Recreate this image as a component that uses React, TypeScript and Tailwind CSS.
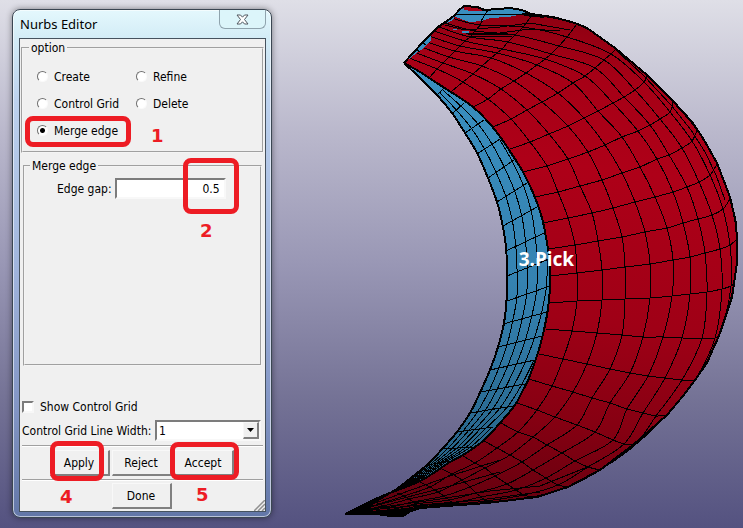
import React from "react";

type Point = [number, number];

/* Smooth curve through every point (Catmull-Rom converted to cubic segments). */
function curve(points: Point[]): string {
  let d = `M${points[0][0]} ${points[0][1]}`;
  for (let i = 0; i < points.length - 1; i++) {
    const p0 = points[Math.max(i - 1, 0)];
    const p1 = points[i];
    const p2 = points[i + 1];
    const p3 = points[Math.min(i + 2, points.length - 1)];
    d += `C${p1[0] + (p2[0] - p0[0]) / 6} ${p1[1] + (p2[1] - p0[1]) / 6} ${p2[0] - (p3[0] - p1[0]) / 6} ${p2[1] - (p3[1] - p1[1]) / 6} ${p2[0]} ${p2[1]}`;
  }
  return d;
}

function line(points: Point[]): string {
  return "M" + points.map((p) => p.join(" ")).join("L");
}

const crown: Point[] = [
  [404, 63], [413, 53], [423, 42], [431, 34], [438, 27], [447, 21], [455, 15], [459, 10], [464, 6],
  [477, 7], [485, 10], [498, 9], [510, 8], [522, 10], [531, 14],
];

const outerEdge: Point[] = [
  [531, 14], [553, 17], [575, 23], [587, 28], [615, 48], [647, 75], [673, 101], [693, 123], [704, 140],
  [717, 163], [730, 197], [736, 223], [737, 240], [737, 263], [732, 297], [720, 333], [707, 363],
  [695, 380], [683, 396], [667, 415], [633, 445], [600, 470], [568, 487], [537, 497], [487, 503],
  [420, 508], [411, 511], [403, 516], [390, 516], [377, 514], [368, 512], [345, 514],
];

const rimEdge: Point[] = [
  [345, 514], [380, 497], [420, 481], [450, 462], [463, 455], [483, 441], [500, 423], [515, 405],
  [523, 390], [529, 378], [540, 346], [547, 315], [550, 287], [550, 263], [547, 243], [542, 218],
  [534, 195], [523, 172], [513, 156], [495, 130], [473, 107], [443, 87], [420, 72], [404, 63],
];

const innerEdge: Point[] = [
  [404, 63], [420, 78], [437, 95], [452, 113], [465, 133], [477, 153], [488, 178], [497, 202],
  [503, 227], [506, 247], [507, 268], [507, 293], [504, 323], [498, 347], [490, 370], [478, 397],
  [470, 413], [457, 432], [443, 448], [428, 464], [407, 481], [390, 493], [345, 514],
];

/* Mesh rows of the red face, each from the rim to the outer silhouette. */
const rows: Point[][] = [
  [[404, 63], [409, 58], [414, 52], [419, 46], [424, 41], [429, 36], [434, 31], [439, 27], [445, 23], [451, 18], [458, 12]],
  [[430, 77], [437, 69], [443, 63], [449, 57], [455, 51], [460, 46], [465, 41], [470, 37], [475, 31], [480, 25], [487, 12]],
  [[452, 91], [463, 82], [473, 74], [482, 66], [491, 58], [497, 53], [502, 49], [508, 42], [515, 35], [523, 27], [532, 15]],
  [[473, 107], [488, 99], [501, 89], [514, 81], [526, 73], [537, 65], [545, 59], [551, 54], [559, 46], [567, 37], [577, 24]],
  [[493, 127], [511, 119], [527, 110], [542, 102], [558, 93], [573, 83], [585, 76], [595, 68], [604, 60], [611, 54], [616, 49]],
  [[510, 149], [530, 142], [549, 134], [568, 126], [584, 118], [598, 111], [613, 103], [624, 97], [635, 90], [644, 82], [647, 76]],
  [[523, 172], [547, 166], [568, 159], [588, 152], [605, 145], [622, 137], [638, 131], [650, 125], [660, 119], [670, 112], [673, 102]],
  [[535, 197], [558, 192], [580, 186], [602, 180], [622, 173], [640, 167], [657, 159], [669, 155], [682, 148], [692, 141], [697, 130]],
  [[543, 223], [568, 218], [592, 213], [613, 208], [635, 202], [655, 197], [673, 192], [687, 187], [699, 182], [710, 175], [717, 164]],
  [[548, 249], [575, 245], [598, 241], [622, 237], [645, 232], [667, 228], [683, 223], [698, 219], [712, 215], [723, 209], [730, 199]],
  [[550, 276], [577, 273], [602, 270], [625, 267], [650, 264], [673, 260], [690, 257], [705, 253], [720, 249], [730, 245], [737, 239]],
  [[550, 303], [577, 301], [602, 300], [625, 299], [650, 298], [672, 296], [690, 294], [707, 292], [722, 289], [731, 286], [734, 283]],
  [[546, 329], [572, 331], [597, 333], [622, 335], [643, 337], [663, 337], [682, 338], [702, 338], [715, 338], [719, 337]],
  [[539, 354], [563, 359], [587, 364], [610, 369], [630, 373], [648, 376], [665, 378], [682, 380], [695, 380]],
  [[529, 379], [552, 386], [573, 392], [592, 398], [610, 403], [627, 409], [643, 413], [656, 416], [667, 415]],
  [[517, 403], [537, 410], [555, 417], [577, 425], [595, 432], [613, 440], [624, 444], [635, 445]],
  [[501, 423], [518, 432], [533, 437], [547, 445], [562, 453], [575, 461], [588, 467], [600, 470]],
  [[484, 441], [497, 448], [510, 455], [522, 462], [533, 470], [546, 478], [558, 485], [568, 487]],
  [[463, 456], [475, 463], [485, 468], [495, 476], [507, 484], [516, 490], [524, 495], [532, 497]],
  [[442, 469], [452, 474], [462, 480], [470, 487], [476, 493], [481, 497], [486, 501], [490, 502]],
  [[420, 482], [430, 487], [438, 492], [444, 496], [449, 500], [453, 503], [457, 504], [460, 505]],
  [[397, 493], [404, 496], [409, 499], [413, 502], [416, 504], [418, 506], [420, 507]],
  [[375, 502], [379, 504], [383, 506], [386, 508], [389, 510], [391, 512], [393, 514]],
  [[345, 514]],
];

const columns: Point[][] = Array.from({ length: 10 }, (_, k) =>
  rows.map((row) => row[Math.min(k + 1, row.length - 1)]),
);

/* Cross lines of the blue inner face, inner edge to rim. */
const ribs: [Point, Point][] = [
  [[437, 95], [444, 88]], [[452, 114], [464, 103]], [[465, 133], [484, 120]], [[477, 154], [500, 139]],
  [[488, 178], [514, 160]], [[497, 202], [527, 183]], [[503, 226], [537, 207]], [[506, 251], [544, 233]],
  [[507, 276], [549, 259]], [[507, 301], [550, 286]], [[503, 324], [547, 312]], [[498, 347], [542, 336]],
  [[490, 370], [535, 360]], [[481, 392], [525, 384]], [[470, 413], [513, 406]], [[457, 432], [493, 427]],
  [[443, 449], [473, 447]], [[427, 465], [450, 461]], [[407, 481], [425, 478]], [[390, 493], [400, 489]],
];

const strands: Point[][] = [1, 2, 3, 4, 5, 6].map((n) => {
  const points: Point[] = [];
  ribs.forEach(([a, b], i) => {
    const step = i < 9 ? 0.38 - i * 0.0175 : 0.24 - (i - 8) * 0.011;
    const t = n * step;
    if (t < 1) points.push([a[0] + (b[0] - a[0]) * t, a[1] + (b[1] - a[1]) * t]);
  });
  points.push([345, 514]);
  return points;
});

function Model() {
  const red = line([...crown, ...outerEdge.slice(1), ...rimEdge.slice(1)]) + "Z";
  const blue = line([...innerEdge, ...rimEdge.slice(1)]) + "Z";
  return (
    <svg
      className="absolute top-0 right-0 h-full"
      viewBox="340 0 403 528"
      preserveAspectRatio="xMaxYMin meet"
      role="img"
      aria-label="Surface mesh"
      shapeRendering="crispEdges"
    >
      <defs>
        <linearGradient id="red" gradientUnits="userSpaceOnUse" x1="560" y1="10" x2="500" y2="515">
          <stop offset="0" stopColor="#8c0011" />
          <stop offset="0.12" stopColor="#a60016" />
          <stop offset="0.3" stopColor="#ae0018" />
          <stop offset="0.6" stopColor="#9f0016" />
          <stop offset="0.8" stopColor="#860012" />
          <stop offset="1" stopColor="#62000e" />
        </linearGradient>
        <linearGradient id="blue" gradientUnits="userSpaceOnUse" x1="0" y1="60" x2="0" y2="500">
          <stop offset="0" stopColor="#398fc0" />
          <stop offset="0.5" stopColor="#3583b2" />
          <stop offset="1" stopColor="#245d80" />
        </linearGradient>
      </defs>
      <path d={blue} fill="url(#blue)" />
      <path d={red} fill="url(#red)" />
      <g fill="none" stroke="#000" strokeWidth="1">
        {rows.slice(1, -1).map((row, i) => <path key={i} d={curve(row)} />)}
        {columns.map((column, i) => <path key={i} d={curve(column)} />)}
        {ribs.map((rib, i) => <path key={i} d={line(rib)} />)}
        {strands.map((strand, i) => <path key={i} d={curve(strand)} />)}
        <path d="M445 25L465 30L500 27L530 23L570 30M466 33L500 33L530 29L560 31M468 34L510 34M468 36L512 36M616 50L645 77L671 105L691 130L705 152L716 175L725 200" />
        <path d="M345 514L400 494L450 476L500 460M345 514L400 499L450 486L500 472M345 514L390 506L440 499L490 491L540 486L590 466M360 511L420 505L480 500L540 492" />
      </g>
      <path d="M454 16L459 11L464 8L483 11L490 9L510 8L522 10L530 14L519 15L508 17L490 18L481 21L470 22L463 20Z" fill="#398fc0" />
      <path d="M464 7L478 8L483 11L472 11L464 10Z" fill="#a60016" />
      <path d="M444 25L455 15L453 20L447 23ZM411 55L431 36L431 40L424 48L418 52L409 59ZM453 29H457V30H453ZM462 31H469V33H462Z" fill="#398fc0" />
      <path d="M457 14L475 15L500 14L531 14M488 10L481 21M423 43L426 45M417 50L420 52" fill="none" stroke="#000" />
      <g fill="none" stroke="#000" strokeWidth="2" strokeLinejoin="round">
        <path d={line(crown)} />
        <path d={line(outerEdge)} />
        <path d={curve(rimEdge)} />
        <path d={curve(innerEdge)} />
      </g>
      <path d="M345 514L375 500L395 491L372 505L368 512ZM370 511L420 507L404 516L377 514ZM522 13L536 14L545 18L524 16ZM482 9H491V11H482Z" fill="#000" />
    </svg>
  );
}

const bevel =
  "border-t border-l border-t-[#f8f8f8] border-l-[#f8f8f8] border-r-2 border-b-2 border-r-[#808080] border-b-[#808080] bg-[#f0f0f0]";
const sunken =
  "border-2 border-t-[#7c7c7c] border-l-[#7c7c7c] border-r-[#f8f8f8] border-b-[#f8f8f8] bg-white";
const group = "border-2 border-[#f4f4f4] [border-style:groove]";

function Radio({ label, checked }: { label: string; checked?: boolean }) {
  return (
    <label className="flex h-[27px] items-center gap-1.5">
      <input
        type="radio"
        name="option"
        defaultChecked={checked}
        className="size-[11px] appearance-none rounded-full border border-t-[#707070] border-r-[#fafafa] border-b-[#fafafa] border-l-[#707070] bg-white checked:bg-[radial-gradient(circle,#000_2px,#fff_3px)]"
      />
      {label}
    </label>
  );
}

function PushButton({ children }: { children: string }) {
  return <button type="button" className={`h-[26px] w-[60px] ${bevel}`}>{children}</button>;
}

function Rule() {
  return <hr className="mx-0.5 h-0.5 border-t border-b border-t-[#a0a0a0] border-b-white" />;
}

function Marker({ className, children }: { className: string; children: string }) {
  return (
    <span className={`absolute font-['DejaVu_Sans'] text-lg leading-5 font-bold text-[#ed1c24] ${className}`}>
      {children}
    </span>
  );
}

function Highlight({ className }: { className: string }) {
  return <span className={`pointer-events-none absolute rounded-lg border-[5px] border-[#ed1c24] ${className}`} />;
}

function NurbsEditor() {
  return (
    <section
      aria-label="Nurbs Editor"
      className="absolute top-[9px] left-3 w-[260px] rounded-lg border border-[#3b4652] bg-[linear-gradient(#e4f8fd,#d3ecf6_28px,#bdd2ee_90px,#a0b4dc_260px,#8295c4_400px,#6377a8)] pr-[5px] pb-[5px] pl-1.5 font-['DejaVu_Sans_Condensed','DejaVu_Sans',sans-serif] text-xs text-black shadow-[inset_0_0_0_1px_#ffffff90,0_0_6px_#00000070]"
    >
      <header className="flex h-7 items-start justify-between">
        <h1 className="pl-px font-['Noto_Sans',sans-serif] text-[13px] leading-7">Nurbs Editor</h1>
        <button
          type="button"
          aria-label="Close"
          className="flex h-[19px] w-[47px] items-center justify-center rounded-b-md border border-t-0 border-[#8fa3ad] bg-[#dcf5fa]"
        >
          <svg width="13" height="11" viewBox="0 0 13 11" aria-hidden="true">
            <path d="M1 1H4.5L6.5 3.2L8.500 1H12L8.500 5.500L12 10H8.500L6.500 7.800L4.500 10H1L4.500 5.500Z" fill="#fff" stroke="#505860" />
          </svg>
        </button>
      </header>

      <form className="relative flex flex-col border border-[#46525e] bg-[#f0f0f0] pb-0.5">
        <fieldset className={`mx-px h-[114px] px-3 ${group}`}>
          <legend className="-ml-1.5 px-0.5 leading-[18px]">option</legend>
          <div className="grid grid-cols-[99px_1fr] pt-1.5 pl-0.5">
            <Radio label="Create" />
            <Radio label="Refine" />
            <Radio label="Control Grid" />
            <Radio label="Delete" />
            <Radio label="Merge edge" checked />
          </div>
        </fieldset>

        <fieldset className={`mx-[3px] mt-1 h-[209px] ${group}`}>
          <legend className="ml-[5px] px-0.5 leading-[18px]">Merge edge</legend>
          <label className="flex items-center gap-[3px] pt-[3px] pl-8">
            Edge gap:
            <input type="text" defaultValue="0.5" className={`h-[21px] w-[111px] px-1 text-right ${sunken}`} />
          </label>
        </fieldset>

        <label className="mt-[31px] flex h-5 items-center gap-1.5 pl-0.5">
          <input type="checkbox" className={`size-3 appearance-none ${sunken}`} />
          Show Control Grid
        </label>

        <div className="mt-[3px] mb-1 flex items-center justify-between pr-1 pl-0.5">
          <label htmlFor="grid-width">Control Grid Line Width:</label>
          <span className="relative">
            <select id="grid-width" className={`h-[21px] w-[106px] appearance-none px-0.5 ${sunken}`}>
              <option>1</option>
            </select>
            <span className={`pointer-events-none absolute top-0.5 right-0.5 flex h-[17px] w-4 items-center justify-center ${bevel}`}>
              <svg width="7" height="4" viewBox="0 0 7 4" aria-hidden="true"><path d="M0 0H7L3.500 4Z" /></svg>
            </span>
          </span>
        </div>

        <Rule />
        <div className="flex justify-center gap-0.5 pt-[3px] pr-0.5 pb-[3px]">
          <PushButton>Apply</PushButton>
          <PushButton>Reject</PushButton>
          <PushButton>Accept</PushButton>
        </div>
        <Rule />
        <div className="flex justify-center pt-0.5 pr-0.5">
          <PushButton>Done</PushButton>
        </div>
        <svg className="absolute right-0 bottom-0" width="11" height="11" viewBox="0 0 11 11" aria-hidden="true">
          <path d="M0 11L11 0M4 11L11 4M8 11L11 8" stroke="#909090" strokeWidth="1.500" />
        </svg>
      </form>

      <Highlight className="top-[106px] left-3 h-[31px] w-[106px]" />
      <Highlight className="top-[148px] left-[170px] h-[56px] w-[56px]" />
      <Highlight className="top-[431px] left-[37px] h-[40px] w-[54px]" />
      <Highlight className="top-[432px] left-[157px] h-[38px] w-[69px]" />
      <Marker className="top-[116px] left-[138px]">1</Marker>
      <Marker className="top-[211px] left-[187px]">2</Marker>
      <Marker className="top-[477px] left-[47px]">4</Marker>
      <Marker className="top-[475px] left-[183px]">5</Marker>
    </section>
  );
}

export default function App() {
  return (
    <main className="relative h-screen overflow-hidden bg-[linear-gradient(#dfdfe7,#bab8cc_25%,#9997b5_50%,#757396_75%,#545280)]">
      <Model />
      <span className="absolute top-[247px] right-[169px] font-['Noto_Sans',sans-serif] text-[19px] leading-6 font-bold text-white">
        3.Pick
      </span>
      <NurbsEditor />
    </main>
  );
}
